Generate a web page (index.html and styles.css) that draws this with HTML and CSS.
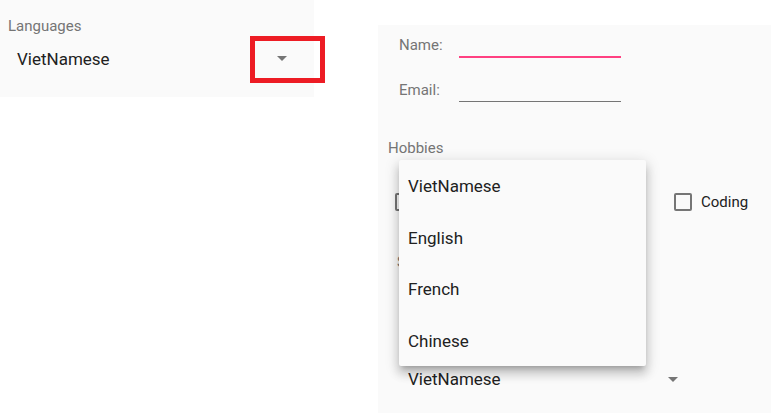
FILE: index.html
```html
<!DOCTYPE html>
<html lang="en">
<head>
    <meta charset="UTF-8">
    <meta name="viewport" content="width=device-width, initial-scale=1.0">
    <title>Languages Form</title>
    <link rel="stylesheet" href="styles.css">
</head>
<body>
    <div class="page">
        <div class="lang-panel">
            <div class="field-label">Languages</div>
            <div class="lang-select">
                <span>VietNamese</span>
                <span class="arrow"></span>
            </div>
            <div class="highlight"></div>
        </div>

        <div class="form-panel">
            <div class="form-row">
                <label class="row-label">Name:</label>
                <div class="text-input active"></div>
            </div>
            <div class="form-row email-row">
                <label class="row-label">Email:</label>
                <div class="text-input"></div>
            </div>

            <div class="section-label">Hobbies</div>
            <div class="hobbies">
                <label class="check"><span class="box"></span></label>
                <label class="check"><span class="box"></span></label>
                <label class="check"><span class="box"></span>Coding</label>
            </div>

            <div class="section-label sex-label">S</div>

            <div class="bottom-select">
                <span>VietNamese</span>
                <span class="arrow"></span>
            </div>

            <!-- open dropdown -->
            <ul class="menu">
                <li>VietNamese</li>
                <li>English</li>
                <li>French</li>
                <li>Chinese</li>
            </ul>
        </div>
    </div>
</body>
</html>
```

FILE: styles.css
```css
body {
    margin: 0;
    background-color: #ffffff;
    font-family: Roboto, "Liberation Sans", Arial, sans-serif;
}

.page {
    display: flex;
    align-items: flex-start;
    width: 782px;
    height: 413px;
    overflow: hidden;
}

.lang-panel {
    position: relative;
    width: 314px;
    height: 97px;
    box-sizing: border-box;
    padding-top: 16px;
    background-color: #fafafa;
}

.field-label {
    padding-left: 8px;
    font-size: 15px;
    line-height: 20px;
    color: #757575;
}

.lang-select {
    display: flex;
    justify-content: space-between;
    align-items: center;
    width: 270px;
    margin-top: 11px;
    margin-left: 17px;
    font-size: 17px;
    line-height: 24px;
    color: #212121;
}

.lang-select .arrow {
    margin-top: -2px;
}

.arrow {
    width: 0;
    height: 0;
    border-left: 5px solid transparent;
    border-right: 5px solid transparent;
    border-top: 5px solid #757575;
}

.highlight {
    position: absolute;
    left: 250px;
    top: 36px;
    width: 75px;
    height: 47px;
    box-sizing: border-box;
    border: 5px solid #ed1c24;
}

.form-panel {
    position: relative;
    width: 393px;
    height: 388px;
    margin-top: 25px;
    margin-left: 64px;
    box-sizing: border-box;
    padding-top: 10px;
    background-color: #fafafa;
}

.form-row {
    display: flex;
    align-items: flex-start;
    padding-left: 21px;
}

.email-row {
    margin-top: 22px;
}

.row-label {
    width: 60px;
    font-size: 15px;
    line-height: 20px;
    color: #757575;
}

.text-input {
    width: 162px;
    height: 21px;
    border-bottom: 1px solid #757575;
}

.text-input.active {
    height: 21px;
    border-bottom: 2px solid #ff4081;
}

.section-label {
    margin-top: 36px;
    padding-left: 10px;
    font-size: 15px;
    line-height: 20px;
    color: #757575;
}

.hobbies {
    display: grid;
    grid-template-columns: 139.5px 139.5px 139.5px;
    margin-top: 35px;
    padding-left: 17px;
}

.check {
    display: flex;
    align-items: center;
    gap: 9px;
    font-size: 15px;
    line-height: 18px;
    color: #212121;
}

.box {
    width: 18px;
    height: 18px;
    box-sizing: border-box;
    border: 2px solid #757575;
    border-radius: 2px;
}

.sex-label {
    margin-top: 41px;
    padding-left: 19px;
}

.bottom-select {
    display: flex;
    justify-content: space-between;
    align-items: center;
    width: 270px;
    margin-top: 95px;
    margin-left: 30px;
    font-size: 17px;
    line-height: 24px;
    color: #212121;
}

.menu {
    position: absolute;
    left: 21px;
    top: 135px;
    width: 247px;
    margin: 0;
    padding: 0;
    list-style: none;
    background-color: #fafafa;
    border-radius: 2px;
    box-shadow: 0 5px 5px -3px rgba(0, 0, 0, 0.2),
                0 8px 10px 1px rgba(0, 0, 0, 0.14),
                0 3px 14px 2px rgba(0, 0, 0, 0.12);
}

.menu li {
    display: flex;
    align-items: center;
    height: 51.5px;
    padding-top: 1px;
    box-sizing: border-box;
    padding-left: 9px;
    font-size: 17px;
    color: #212121;
}
```
